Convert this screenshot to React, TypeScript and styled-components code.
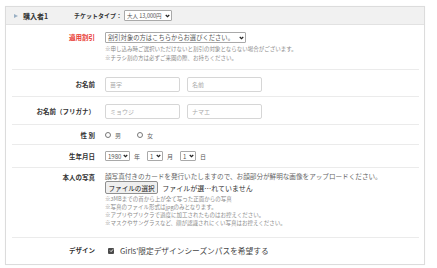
import React from "react";
import styled, { createGlobalStyle } from "styled-components";

const Global = createGlobalStyle`
  html, body { margin: 0; padding: 0; background: #fff; }
  body { font-family: "Noto Sans CJK JP", "Noto Sans", sans-serif; color: #333; }
  * { box-sizing: border-box; }
`;

const Page = styled.div`
  padding: 6px 12px 4px 5px;
`;

const Card = styled.section`
  border: 1px solid #dcdcdc;
  background: #fff;
  box-shadow: 0 0 1px rgba(0,0,0,0.05);
`;

const Header = styled.header`
  height: 18px;
  background: #f1f1f1;
  border-bottom: 1px solid #e2e2e2;
  display: flex;
  align-items: center;
  padding-left: 8px;
`;

const Triangle = styled.span`
  width: 0;
  height: 0;
  border-top: 2.5px solid transparent;
  border-bottom: 2.5px solid transparent;
  border-left: 4px solid #9ab0c4;
  margin-right: 5px;
`;

const HeaderTitle = styled.span`
  font-size: 7px;
  font-weight: 700;
  width: 51px;
`;

const HeaderLabel = styled.span`
  font-size: 6px;
  font-weight: 700;
  margin-right: 2px;
`;

const Body = styled.div`
  padding: 0 5px 0 6px;
`;

const Row = styled.div<{ $pt?: number; $pb?: number }>`
  display: grid;
  grid-template-columns: 83px 1fr;
  column-gap: 10px;
  align-items: start;
  padding: ${(p) => p.$pt ?? 7}px 0 ${(p) => p.$pb ?? 6}px;
  border-bottom: 1px solid #ebebeb;
  &:last-child { border-bottom: none; }
`;

const Label = styled.div<{ $red?: boolean; $h?: number }>`
  text-align: right;
  font-size: 6.5px;
  font-weight: 700;
  color: ${(p) => (p.$red ? "#e8332e" : "#333")};
  line-height: ${(p) => p.$h ?? 10}px;
  white-space: nowrap;
`;

const Value = styled.div`
  display: flex;
  flex-direction: column;
  align-items: flex-start;
`;

const Inline = styled.div<{ $gap?: number }>`
  display: flex;
  align-items: center;
  gap: ${(p) => p.$gap ?? 4}px;
  min-height: 10px;
  font-size: 6px;
  color: #555;
`;

const SelectBox = styled.span<{ $w: number; $h?: number; $fs?: number; $ml?: number }>`
  display: inline-flex;
  align-items: center;
  justify-content: space-between;
  width: ${(p) => p.$w}px;
  height: ${(p) => p.$h ?? 10}px;
  margin-left: ${(p) => p.$ml ?? 0}px;
  border: 1px solid #a9a9a9;
  border-radius: 1px;
  background: #fff;
  padding: 0 1.5px 0 2px;
  font-size: ${(p) => p.$fs ?? 6}px;
  color: #555;
  white-space: nowrap;
  overflow: hidden;
`;

const Note = styled.div<{ $lh?: number; $mt?: number }>`
  font-size: 5.5px;
  color: #8a8a8a;
  line-height: ${(p) => p.$lh ?? 9}px;
  margin-top: ${(p) => p.$mt ?? 0}px;
  white-space: nowrap;
`;

const Desc = styled.div`
  font-size: 6.6px;
  color: #666;
  line-height: 9px;
  white-space: nowrap;
`;

const TextInput = styled.input`
  width: 75px;
  height: 15px;
  border: 1px solid #d6d6d6;
  border-radius: 2px;
  padding: 0 4px;
  font-family: inherit;
  font-size: 6px;
  color: #333;
  &::placeholder { color: #aaa; }
`;

const RadioLabel = styled.label`
  display: inline-flex;
  align-items: center;
  gap: 4px;
  margin-right: 16px;
  font-size: 6px;
  color: #666;
`;

const RadioDot = styled.span`
  width: 6px;
  height: 6px;
  border-radius: 50%;
  border: 1px solid #777;
  background: #fff;
`;

const FileButton = styled.span`
  display: inline-flex;
  align-items: center;
  height: 13px;
  padding: 0 2.5px;
  border: 1px solid #8f8f8f;
  border-radius: 2px;
  background: #efefef;
  font-size: 6.6px;
  color: #111;
  white-space: nowrap;
`;

const FileText = styled.span`
  font-size: 7px;
  color: #333;
  white-space: nowrap;
`;

const Check = styled.span`
  width: 6px;
  height: 6px;
  border-radius: 1px;
  background: #4a4a4a;
  display: inline-flex;
  align-items: center;
  justify-content: center;
  margin-left: 3px;
  margin-right: 6px;
`;

const CheckText = styled.span`
  font-size: 7.7px;
  color: #444;
  white-space: nowrap;
`;

const Chevron = () => (
  <svg width="5" height="4" viewBox="0 0 10 8">
    <path d="M1.5 2 L5 5.5 L8.5 2" fill="none" stroke="#222" strokeWidth="2.4" />
  </svg>
);

const Tick = () => (
  <svg width="5" height="5" viewBox="0 0 10 10">
    <path d="M2 5 L4.2 7.2 L8 2.8" fill="none" stroke="#fff" strokeWidth="1.8" />
  </svg>
);

export default function App() {
  return (
    <>
      <Global />
      <Page>
        <Card>
          <Header>
            <Triangle />
            <HeaderTitle>購入者1</HeaderTitle>
            <HeaderLabel>チケットタイプ：</HeaderLabel>
            <SelectBox $w={48} $h={11} $fs={5.5}>
              大人 13,000円 <Chevron />
            </SelectBox>
          </Header>
          <Body>
            <Row $pt={7} $pb={6}>
              <Label $red>適用割引</Label>
              <Value>
                <SelectBox $w={141} $h={11} $fs={6.3}>
                  割引対象の方はこちらからお選びください。 <Chevron />
                </SelectBox>
                <Note $mt={2}>※申し込み時ご選択いただけないと割引の対象とならない場合がございます。</Note>
                <Note>※チラシ割の方は必ずご来園の際、お持ちください。</Note>
              </Value>
            </Row>
            <Row $pt={7} $pb={4}>
              <Label $h={15}>お名前</Label>
              <Inline $gap={7}>
                <TextInput placeholder="苗字" />
                <TextInput placeholder="名前" />
              </Inline>
            </Row>
            <Row $pt={7} $pb={5}>
              <Label $h={15}>お名前（フリガナ）</Label>
              <Inline $gap={7}>
                <TextInput placeholder="ミョウジ" />
                <TextInput placeholder="ナマエ" />
              </Inline>
            </Row>
            <Row $pt={5} $pb={4}>
              <Label>性 別</Label>
              <Inline $gap={0}>
                <RadioLabel><RadioDot />男</RadioLabel>
                <RadioLabel><RadioDot />女</RadioLabel>
              </Inline>
            </Row>
            <Row $pt={6} $pb={6}>
              <Label>生年月日</Label>
              <Inline $gap={4}>
                <SelectBox $w={25}>1980<Chevron /></SelectBox>
                <span>年</span>
                <SelectBox $w={16} $ml={3}>1<Chevron /></SelectBox>
                <span>月</span>
                <SelectBox $w={16} $ml={3}>1<Chevron /></SelectBox>
                <span>日</span>
              </Inline>
            </Row>
            <Row $pt={4} $pb={10}>
              <Label>本人の写真</Label>
              <Value>
                <Desc>顔写真付きのカードを発行いたしますので、お顔部分が鮮明な画像をアップロードください。</Desc>
                <Inline>
                  <FileButton>ファイルの選択</FileButton>
                  <FileText>ファイルが選…れていません</FileText>
                </Inline>
                <Note $lh={8} $mt={1}>※3MBまでの首から上が全て写った正面からの写真</Note>
                <Note $lh={8}>※写真のファイル形式はjpgのみとなります。</Note>
                <Note $lh={8}>※アプリやプリクラで過度に加工されたものはお控えください。</Note>
                <Note $lh={8}>※マスクやサングラスなど、顔が認識されにくい写真はお控えください。</Note>
              </Value>
            </Row>
            <Row $pt={7} $pb={8}>
              <Label>デザイン</Label>
              <Inline $gap={0}>
                <Check><Tick /></Check>
                <CheckText>Girls'限定デザインシーズンパスを希望する</CheckText>
              </Inline>
            </Row>
          </Body>
        </Card>
      </Page>
    </>
  );
}
